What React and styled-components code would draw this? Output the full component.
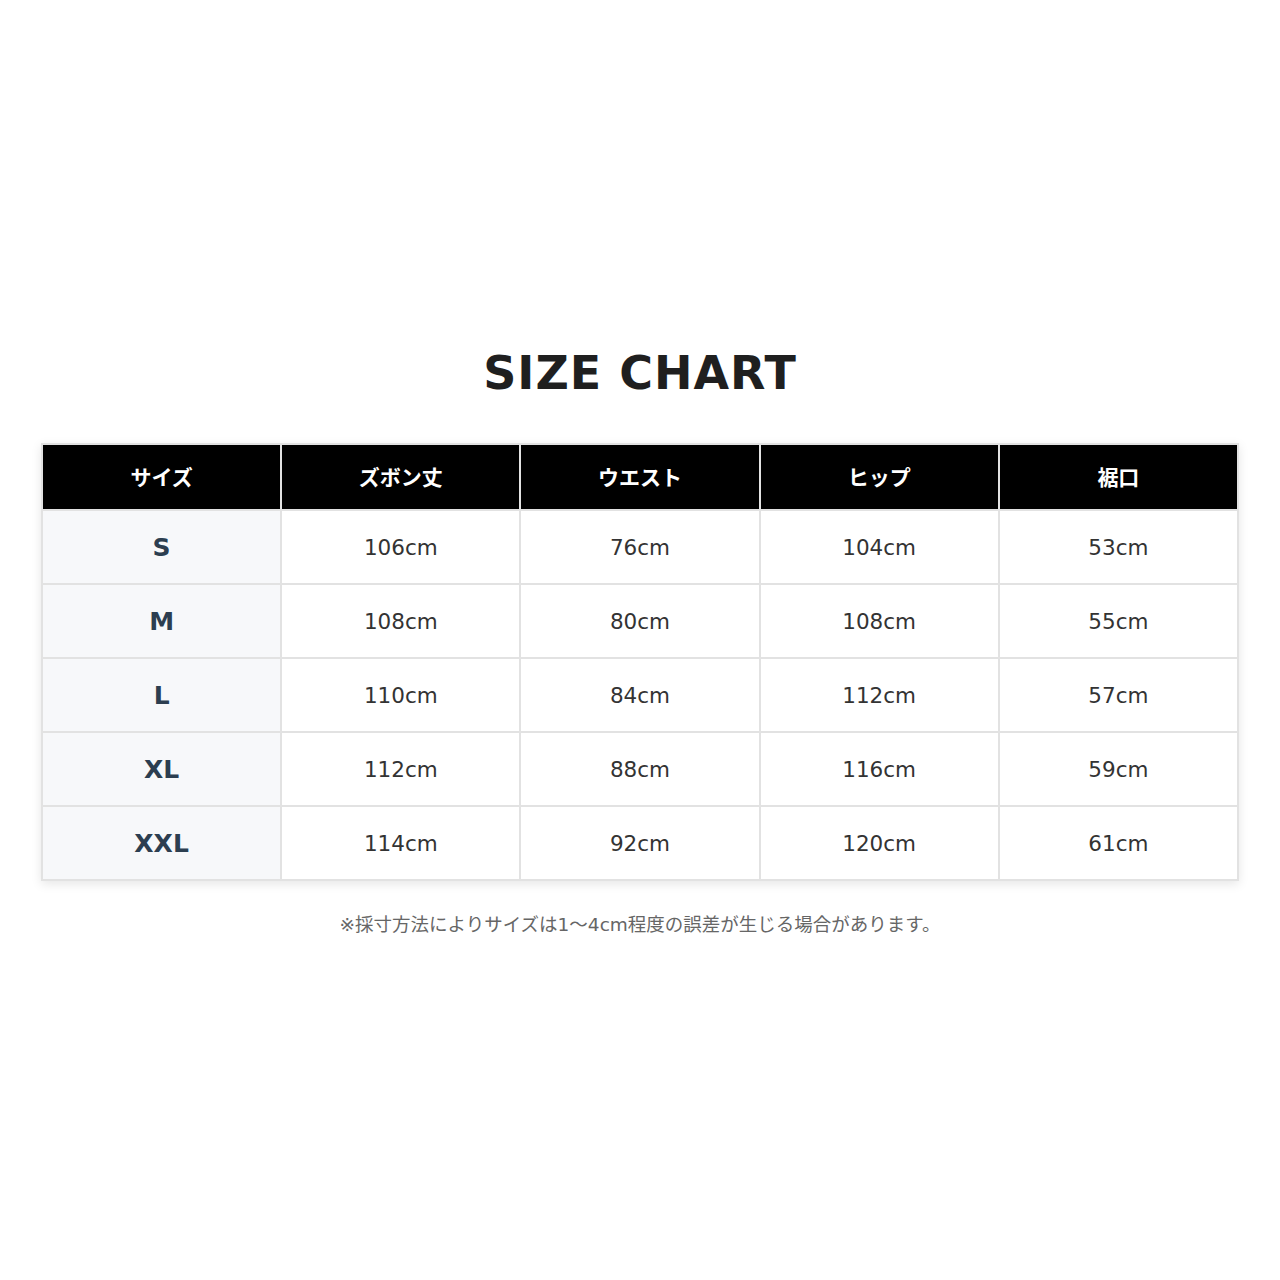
import React from 'react';
import styled, { createGlobalStyle } from 'styled-components';

const GlobalStyle = createGlobalStyle`
  html, body {
    margin: 0;
    padding: 0;
    background: #ffffff;
  }
  body {
    font-family: "DejaVu Sans", "Noto Sans CJK JP", sans-serif;
  }
`;

const Page = styled.div`
  width: 1280px;
  height: 1280px;
  box-sizing: border-box;
  padding: 345px 41px 0 41px;
  display: flex;
  flex-direction: column;
  align-items: center;
`;

const Title = styled.h1`
  margin: 0 0 42px 0;
  font-family: "DejaVu Sans", "Noto Sans CJK JP", sans-serif;
  font-weight: bold;
  font-size: 46px;
  line-height: 56px;
  letter-spacing: 1px;
  color: #1f1f1f;
`;

const Table = styled.table`
  width: 1198px;
  border-collapse: collapse;
  table-layout: fixed;
  box-shadow: 0 3px 10px rgba(0, 0, 0, 0.1);
`;

const HeadCell = styled.th`
  height: 61px;
  padding: 0 0 3px 0;
  background: #000000;
  color: #ffffff;
  border: 2px solid #e2e2e2;
  font-family: "DejaVu Sans", "Noto Sans CJK JP", sans-serif;
  font-weight: bold;
  font-size: 21px;
  text-align: center;
  vertical-align: middle;
`;

const Cell = styled.td`
  height: 72px;
  padding: 0;
  border: 2px solid #e2e2e2;
  background: ${(p) => (p.$label ? '#f7f8fa' : '#ffffff')};
  color: ${(p) => (p.$label ? '#2c3e50' : '#333333')};
  font-weight: ${(p) => (p.$label ? 'bold' : 'normal')};
  font-size: ${(p) => (p.$label ? '25px' : '21.5px')};
  text-align: center;
  vertical-align: middle;
`;

const Note = styled.p`
  margin: 29px 0 0 0;
  font-family: "DejaVu Sans", "Noto Sans CJK JP", sans-serif;
  font-size: 18.5px;
  color: #666666;
`;

const headers = ['サイズ', 'ズボン丈', 'ウエスト', 'ヒップ', '裾口'];

const rows = [
  ['S', '106cm', '76cm', '104cm', '53cm'],
  ['M', '108cm', '80cm', '108cm', '55cm'],
  ['L', '110cm', '84cm', '112cm', '57cm'],
  ['XL', '112cm', '88cm', '116cm', '59cm'],
  ['XXL', '114cm', '92cm', '120cm', '61cm'],
];

export default function App() {
  return (
    <>
      <GlobalStyle />
      <Page>
        <Title>SIZE CHART</Title>
        <Table>
          <thead>
            <tr>
              {headers.map((h) => (
                <HeadCell key={h}>{h}</HeadCell>
              ))}
            </tr>
          </thead>
          <tbody>
            {rows.map((row) => (
              <tr key={row[0]}>
                {row.map((v, i) => (
                  <Cell key={i} $label={i === 0}>{v}</Cell>
                ))}
              </tr>
            ))}
          </tbody>
        </Table>
        <Note>※採寸方法によりサイズは1～4cm程度の誤差が生じる場合があります。</Note>
      </Page>
    </>
  );
}
